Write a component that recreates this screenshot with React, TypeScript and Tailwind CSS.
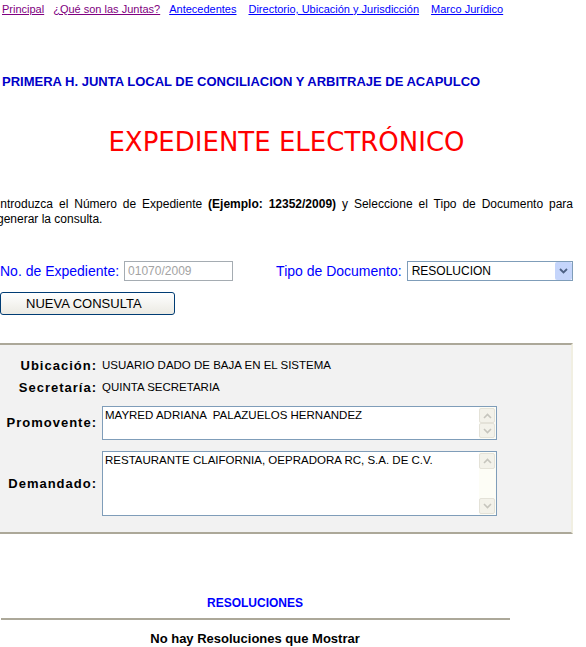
function ScrollBtn({ up }: { up: boolean }) {
    return (
        <div className="flex h-[16px] w-[16px] items-center justify-center rounded-[2px] border border-[#e4e2d8] bg-[#f3f2ea]">
            <svg width="9" height="6" viewBox="0 0 9 6">
                <path
                    d={up ? "M1 5 L4.5 1.5 L8 5" : "M1 1 L4.5 4.5 L8 1"}
                    fill="none"
                    stroke="#c6c5bd"
                    strokeWidth="1.6"
                />
            </svg>
        </div>
    );
}

function TextBox({ text, h }: { text: string; h: string }) {
    return (
        <div className={`flex w-[395px] border border-[#7f9db9] bg-white ${h}`}>
            <div className="flex-1 whitespace-pre-wrap pl-[2px] pt-[1px] text-[11.5px] leading-[14px] text-black">{text}</div>
            <div className="flex w-[17px] flex-col justify-between bg-[#fdfdf6] pt-[1px] pb-[1px]">
                <ScrollBtn up={true} />
                <ScrollBtn up={false} />
            </div>
        </div>
    );
}

function App() {
    return (
        <main className="w-[573px] bg-white font-['Liberation_Sans',Arial,sans-serif] text-black">
            {/* top links */}
            <nav className="flex h-[18px] items-center text-[11px]">
                <a href="#" className="ml-[2px] text-[#800080] underline">Principal</a>
                <a href="#" className="ml-[9px] text-[#800080] underline">¿Qué son las Juntas?</a>
                <a href="#" className="ml-[9px] text-[#0000ff] underline">Antecedentes</a>
                <a href="#" className="ml-[12px] text-[#0000ff] underline">Directorio, Ubicación y Jurisdicción</a>
                <a href="#" className="ml-[12px] text-[#0000ff] underline">Marco Jurídico</a>
            </nav>

            <h2 className="mt-[56px] ml-[2px] text-[13px] font-bold leading-[16px] text-[#0000c8]">
                PRIMERA H. JUNTA LOCAL DE CONCILIACION Y ARBITRAJE DE ACAPULCO
            </h2>

            <h1 className="mt-[37px] text-center font-['DejaVu_Sans',sans-serif] text-[26px] leading-[30px] text-[#ff0000]">
                EXPEDIENTE ELECTRÓNICO
            </h1>

            <p className="mt-[40px] -ml-[3px] w-[576px] text-justify text-[12px] leading-[15px]">
                Introduzca el Número de Expediente <b>(Ejemplo: 12352/2009)</b> y Seleccione el Tipo de Documento para generar la consulta.
            </p>

            {/* search form */}
            <div className="mt-[34px] flex h-[20px] items-center text-[14px] text-[#0000ff]">
                <span>No. de Expediente:</span>
                <div className="ml-[5px] flex h-[20px] w-[109px] items-center border border-[#a5acb2] bg-white pl-[3px] text-[12px] text-[#a3a3a3]">
                    01070/2009
                </div>
                <span className="ml-[43px]">Tipo de Documento:</span>
                <div className="ml-[5px] flex h-[20px] flex-1 items-center border border-[#7f9db9] bg-white">
                    <span className="flex-1 pl-[4px] text-[12px] text-black">RESOLUCION</span>
                    <div className="flex h-[18px] w-[17px] items-center justify-center rounded-[2px] bg-[#c5d5fb]">
                        <svg width="9" height="6" viewBox="0 0 9 6">
                            <path d="M1 1 L4.5 4.5 L8 1" fill="none" stroke="#4d6185" strokeWidth="1.8" />
                        </svg>
                    </div>
                </div>
            </div>

            <button className="mt-[11px] flex h-[23px] w-[175px] items-center rounded-[3px] border border-[#003c74] bg-gradient-to-b from-white to-[#ebeae3] pl-[25px] text-[13px] text-black">
                NUEVA CONSULTA
            </button>

            {/* expediente data */}
            <section className="mt-[28px] border-t-2 border-b-2 border-r-2 border-t-[#aca899] border-b-[#aca899] border-r-[#f1efe2] bg-[#f2f2f2] pt-[10px] pb-[16px]">
                <div className="grid grid-cols-[97px_1fr] gap-x-[5px]">
                    <div className="flex h-[22px] items-center justify-end text-[13px] font-bold tracking-[1px]">Ubicación:</div>
                    <div className="flex h-[22px] items-center text-[11.5px]">USUARIO DADO DE BAJA EN EL SISTEMA</div>

                    <div className="flex h-[22px] items-center justify-end text-[13px] font-bold tracking-[1px]">Secretaría:</div>
                    <div className="flex h-[22px] items-center text-[11.5px]">QUINTA SECRETARIA</div>

                    <div className="mt-[7px] flex items-center justify-end text-[13px] font-bold tracking-[1px]">Promovente:</div>
                    <div className="mt-[7px]">
                        <TextBox text="MAYRED ADRIANA  PALAZUELOS HERNANDEZ" h="h-[34px]" />
                    </div>

                    <div className="mt-[11px] flex items-center justify-end text-[13px] font-bold tracking-[1px]">Demandado:</div>
                    <div className="mt-[11px]">
                        <TextBox text="RESTAURANTE CLAIFORNIA, OEPRADORA RC, S.A. DE C.V." h="h-[65px]" />
                    </div>
                </div>
            </section>

            {/* resoluciones */}
            <div className="w-[510px]">
                <div className="mt-[62px] text-center text-[12px] font-bold leading-[15px] text-[#0000ff]">RESOLUCIONES</div>
                <div className="mt-[7px] ml-[1px] h-[2px] border-t-2 border-[#aca899]"></div>
                <div className="mt-[11px] text-center text-[13px] font-bold leading-[16px]">No hay Resoluciones que Mostrar</div>
            </div>
        </main>
    );
}

export default App;
